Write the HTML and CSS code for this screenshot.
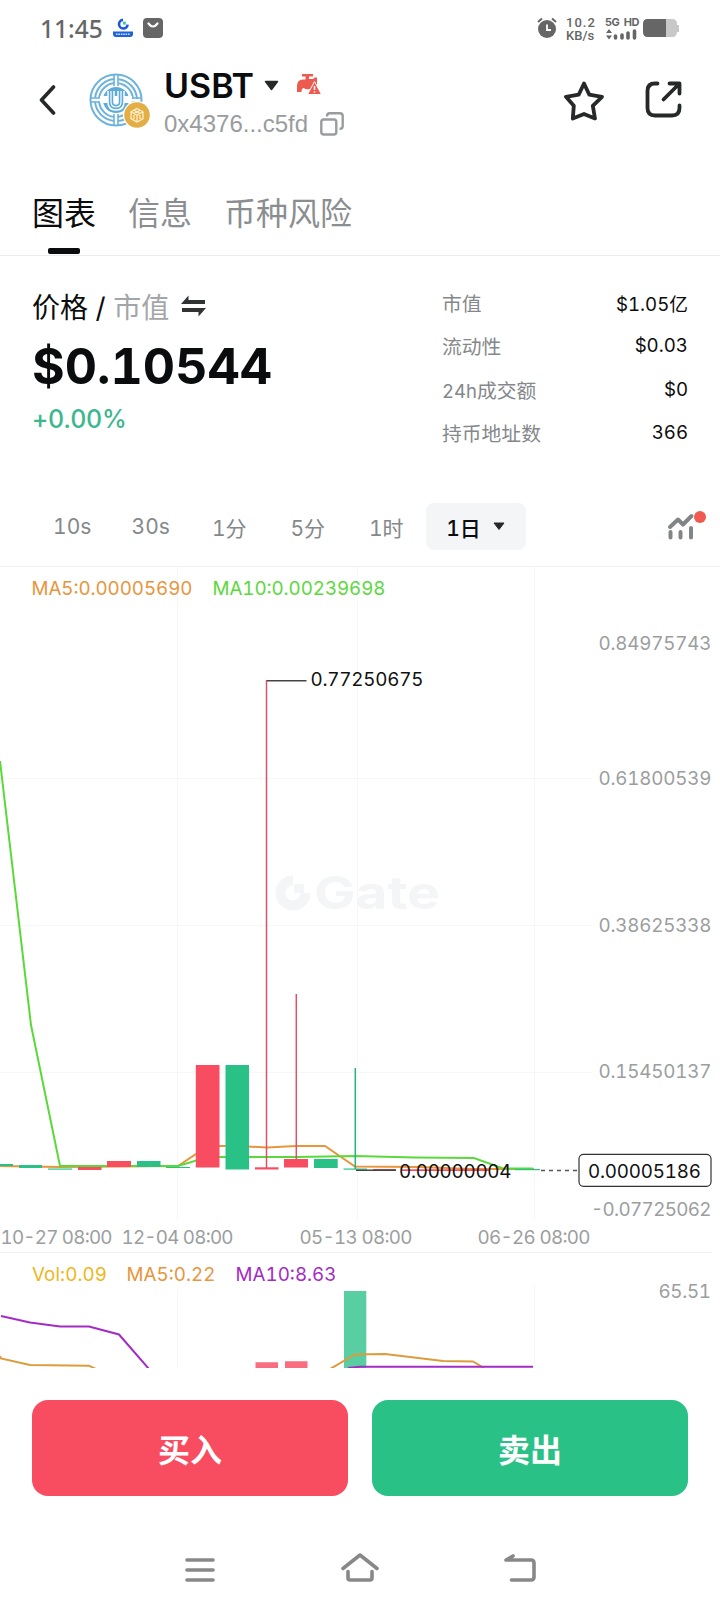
FILE: index.html
```html
<!DOCTYPE html>
<html lang="zh-CN">
<head>
  <meta charset="UTF-8">
  <meta name="viewport" content="width=device-width, initial-scale=1.0">
  <title>USBT</title>
  <link rel="stylesheet" href="styles.css">
</head>
<body>

<div class="app">
  <!-- Status bar -->
  <div class="status-bar">
    <div class="status-left">
      <span class="clock">11:45</span>
      <svg class="status-app" width="20" height="20" viewBox="0 0 20 20">
        <path d="M10 1.900A4.300 4.300 0 1 0 14.600 6.600" fill="none" stroke="#1d55e0" stroke-width="2.600"/>
        <path d="M10 3.600h2.800v3H10z" fill="#2fd0a0"/>
        <path d="M0 13.500h20v2.500q0 3-3 3H3q-3 0-3-3z" fill="#1d62d8"/>
        <path d="M3 16.300h14" stroke="#cfe0ff" stroke-width="1.600" stroke-dasharray="1.600 .8"/>
      </svg>
      <svg width="20" height="20" viewBox="0 0 20 20">
        <rect width="20" height="20" rx="4" fill="#666"/>
        <path d="M5.500 5.500q4.500 6 9 0" fill="none" stroke="#fff" stroke-width="2.200" stroke-linecap="round"/>
      </svg>
    </div>
    <div class="status-right">
      <svg width="20" height="22" viewBox="0 0 20 22">
        <circle cx="10" cy="12" r="9" fill="#666"/>
        <path d="M1 5l4-3.500M19 5l-4-3.500" stroke="#666" stroke-width="2"/>
        <path d="M10 7.500v5.500h4" fill="none" stroke="#fff" stroke-width="1.800"/>
      </svg>
      <div class="net-speed"><span>10.2</span><span>KB/s</span></div>
      <div class="signal">
        <span>5G HD</span>
        <svg width="32" height="12" viewBox="0 0 32 12">
          <path d="M1 5l3-4 3 4zM1 7.500l3 4 3-4z" fill="#666"/>
          <path d="M10.500 8v2M17 7v3M23 5v5M29.500 3v7" stroke="#666" stroke-width="3.600" stroke-linecap="round"/>
        </svg>
      </div>
      <svg width="36" height="18" viewBox="0 0 36 18">
        <path d="M5 0h24q5 0 5 5v1h2v7h-2q0 5-5 5H5q-5 0-5-5V5q0-5 5-5z" fill="#c8c8c8"/>
        <path d="M5 0h18v18H5q-5 0-5-5V5q0-5 5-5z" fill="#666"/>
      </svg>
    </div>
  </div>

  <!-- Token header -->
  <div class="header">
    <svg class="back" width="17" height="30" viewBox="0 0 17 30">
      <path d="M14.500 2L2.500 15l12 13" fill="none" stroke="#26282a" stroke-width="3.600" stroke-linecap="round" stroke-linejoin="round"/>
    </svg>
    <svg class="token-logo" width="62" height="56" viewBox="0 0 62 56">
      <g fill="none" stroke="#6db3dc" stroke-width="2">
        <circle cx="27" cy="27" r="25.500"/>
        <circle cx="27" cy="27" r="21" stroke-dasharray="29 4" stroke-dashoffset="-2"/>
        <circle cx="27" cy="27" r="17" stroke-dasharray="22.700 4" stroke-dashoffset="-2"/>
        <path d="M25 2v11M29 2v11M25 41v11M29 41v11M2 25h11M2 29h11M41 25h11M41 29h11" stroke-width="1.600"/>
      </g>
      <circle cx="27" cy="27" r="13" fill="#5eabd9"/>
      <path d="M11 23h32v7H11z" fill="#fff"/>
      <path d="M22 18v11q0 5 5 5t5-5V18" fill="none" stroke="#fff" stroke-width="7.500"/>
      <path d="M22 18v11q0 5 5 5t5-5V18" fill="none" stroke="#5eabd9" stroke-width="4.500"/>
      <path d="M22 18v11q0 5 5 5t5-5V18" fill="none" stroke="#fff" stroke-width="1.200"/>
      <circle cx="48" cy="42" r="14" fill="#fff"/>
      <circle cx="48" cy="42" r="12.800" fill="#e4ae46"/>
      <path d="M48 35.500l6 3.300v6.800l-6 3.400-6-3.400v-6.800zM42 38.800l6 3.400 6-3.400M48 42.200v6.500M45 37.200l6 3.300M51 37.200l-6 3.300M45 42v4M51 42v4" fill="none" stroke="#fff3d2" stroke-width="1.200"/>
    </svg>
    <div class="token">
      <div class="token-name">
        <span>USBT</span>
        <svg width="15" height="11" viewBox="0 0 15 11"><path d="M1.500 1.500h12l-6 8z" fill="#26282a" stroke="#26282a" stroke-width="1.500" stroke-linejoin="round"/></svg>
        <svg class="faucet" width="24" height="21" viewBox="0 0 24 21">
          <path d="M5 0h11v2.500h-4V5h4l1.500-1.500H20V15l-5 3-2-3q-5 1-6-1-2.500 0-2.500 4H0v-6Q0 5.500 6 5.500h2.500v-3H5z" fill="#ec5a50"/>
          <path d="M17.500 7.500l7 13H10.500z" fill="#ec5a50" stroke="#fff" stroke-width="1"/>
          <path d="M17.500 12v4M17.500 17.200v1.500" stroke="#fff" stroke-width="1.500"/>
        </svg>
      </div>
      <div class="token-address">
        <span>0x4376...c5fd</span>
        <svg width="24" height="24" viewBox="0 0 24 24" fill="none" stroke="#999c9e" stroke-width="2.400">
          <rect x="1.300" y="7.500" width="15" height="15" rx="2.500"/>
          <path d="M7 4.500V4q0-2.700 2.700-2.700H20q2.700 0 2.700 2.700v10q0 2.700-2.700 2.700h-.5"/>
        </svg>
      </div>
    </div>
    <div class="header-actions">
      <svg width="40" height="40" viewBox="0 0 40 40">
        <path d="M20 2.500l5.300 11.200L38 15.800l-9.200 9 2.200 12.700L20 33l-11.200 4.500 1-12.700L2 15.800l12.700-2.100z" fill="none" stroke="#26282a" stroke-width="3.800" stroke-linejoin="round"/>
      </svg>
      <svg width="37" height="37" viewBox="0 0 37 37" fill="none" stroke="#26282a" stroke-width="3.800" stroke-linecap="round" stroke-linejoin="round">
        <path d="M12.500 2.500H10Q2.500 2.500 2.500 10v17q0 7.500 7.500 7.500h17q7.500 0 7.500-7.500v-2.500"/>
        <path d="M24.500 2.500h10v10M34 3L18.500 18.500"/>
      </svg>
    </div>
  </div>

  <!-- Tabs -->
  <div class="tabs">
    <div class="tab active">图表</div>
    <div class="tab">信息</div>
    <div class="tab">币种风险</div>
  </div>

  <!-- Price and stats -->
  <div class="summary">
    <div class="price-box">
      <div class="price-switch">
        <span>价格 / <em>市值</em></span>
        <svg width="25" height="22" viewBox="0 0 25 22" fill="#303234">
          <path d="M0 9L7.500.5V5H24v4zM25 13l-7.500 8.500V17H1v-4z"/>
        </svg>
      </div>
      <div class="price">$0.10544</div>
      <div class="change">+0.00%</div>
    </div>
    <div class="stats">
      <div class="stat"><span>市值</span><b>$1.05亿</b></div>
      <div class="stat"><span>流动性</span><b>$0.03</b></div>
      <div class="stat"><span><i>24h</i>成交额</span><b>$0</b></div>
      <div class="stat"><span>持币地址数</span><b>366</b></div>
    </div>
  </div>

  <!-- Time range -->
  <div class="periods">
    <span class="period">10s</span>
    <span class="period">30s</span>
    <span class="period">1分</span>
    <span class="period">5分</span>
    <span class="period">1时</span>
    <span class="period selected">1日
      <svg width="12" height="9" viewBox="0 0 12 9"><path d="M1 1h10L6 7.500z" fill="#26282a" stroke="#26282a" stroke-linejoin="round"/></svg>
    </span>
    <svg class="indicator" width="40" height="32" viewBox="0 0 40 32">
      <g fill="none" stroke="#828587" stroke-width="4" stroke-linecap="round">
        <path d="M4 17l8-7.500 5 5 8.500-8.500" stroke-linejoin="round"/>
        <path d="M4.500 22v5.500M14.500 22v5.500M25 18v9.500"/>
      </g>
      <circle cx="34" cy="7" r="6" fill="#f05a50"/>
    </svg>
  </div>

  <!-- Candles and volume -->
  <svg class="chart" width="720" height="801" viewBox="0 567 720 801">
    <g class="grid">
      <path d="M177.500 567v653M357.500 567v653M534.500 567v653M0 778.500h592M0 925.500h592M0 1072.500h592M177.500 1285v83M534.500 1285v83"/>
      <path class="divider" d="M0 1252.500h712"/>
    </g>

    <g class="watermark">
      <path d="M293 880.500a12.500 12.500 0 1 0 12.500 12.500"/>
      <path class="dot" d="M294 884h10v9h-10z"/>
      <text x="314" y="909" textLength="126" lengthAdjust="spacingAndGlyphs">Gate</text>
    </g>

    <path class="ma5" d="M0 1166L60 1167L178 1166L208 1146H237L267 1147.500L296 1146H325L355 1166.500L420 1167L470 1169H534"/>
    <path class="ma10" d="M0 761L31 1025L60 1166H178L208 1157H296L355 1156L415 1157.500L474 1158L503 1168.500H533"/>

    <g class="down">
      <rect x="78" y="1167" width="23.500" height="3"/>
      <rect x="107" y="1161" width="24" height="6"/>
      <rect x="195.800" y="1065" width="23.700" height="102.500"/>
      <rect x="255" y="1167.300" width="23.500" height="2.200"/>
      <rect x="284" y="1159" width="24" height="8.500"/>
      <rect x="373" y="1169" width="23" height="1.600"/>
      <rect x="402" y="1169.300" width="88" height="1.700"/>
      <path d="M266.500 680v488M296.300 994v166"/>
    </g>
    <g class="up">
      <rect x="0" y="1164" width="13" height="2"/>
      <rect x="19" y="1165" width="23" height="3"/>
      <rect x="48" y="1168.500" width="24" height="1.200"/>
      <rect x="137" y="1161" width="23.500" height="6"/>
      <rect x="166" y="1167" width="24" height="1"/>
      <rect x="225.500" y="1065" width="23.500" height="104.500"/>
      <rect x="314" y="1159" width="23.700" height="9"/>
      <rect x="343.500" y="1168.500" width="23.500" height="1.200"/>
      <rect x="515" y="1169" width="25" height="1.200"/>
      <path d="M355.300 1068v101"/>
    </g>

    <!-- High / low marks -->
    <path class="mark" d="M267 680.800h39.500M356 1170.200h40"/>
    <text class="mark-text" x="310.500" y="686" textLength="113">0.77250675</text>
    <text class="mark-text" x="399" y="1178" textLength="112.500">0.00000004</text>

    <!-- Current price -->
    <path class="current-line" d="M541 1170.500h38"/>
    <rect class="current-box" x="579" y="1154.300" width="132" height="32" rx="4.500"/>
    <text class="mark-text" x="588" y="1178" textLength="113">0.00005186</text>

    <g class="axis">
      <text x="598.500" y="650" textLength="113">0.84975743</text>
      <text x="598.500" y="785" textLength="113">0.61800539</text>
      <text x="598.500" y="932" textLength="113">0.38625338</text>
      <text x="598.500" y="1078" textLength="113">0.15450137</text>
      <text x="591" y="1216" textLength="120.500">-0.07725062</text>
      <text x="658.500" y="1298" textLength="52.500">65.51</text>
      <text x="0.500" y="1244" textLength="112">10-27 08:00</text>
      <text x="121.500" y="1244" textLength="112">12-04 08:00</text>
      <text x="299.500" y="1244" textLength="113">05-13 08:00</text>
      <text x="477.500" y="1244" textLength="113">06-26 08:00</text>
    </g>

    <g class="legend">
      <text x="31.500" y="595" textLength="161" fill="#e8953c">MA5:0.00005690</text>
      <text x="212.500" y="595" textLength="173" fill="#5bd93c">MA10:0.00239698</text>
      <text x="32" y="1281" textLength="75" fill="#efb61c">Vol:0.09</text>
      <text x="126.500" y="1281" textLength="89" fill="#e8953c">MA5:0.22</text>
      <text x="235.500" y="1281" textLength="101" fill="#a32cc4">MA10:8.63</text>
    </g>

    <!-- Volume -->
    <path d="M255.500 1362.300H278v6h-22.500zM285 1361.300h22.500v7H285z" fill="#f86e80"/>
    <path d="M344 1291h22.300v77H344z" fill="#58cea2"/>
    <path class="vol-ma5" d="M0 1356L1 1358.500L30 1365L89 1365.700L96 1369M330 1369L355 1354.500L385 1354L443 1361L473 1361.500L484 1368"/>
    <path class="vol-ma10" d="M1 1316L30 1322.500L60 1326.500H89L119 1334.500L149 1369M348 1368L360 1366.700H533"/>
  </svg>

  <!-- Buy / sell -->
  <div class="trade">
    <button class="buy">买入</button>
    <button class="sell">卖出</button>
  </div>

  <!-- System navigation -->
  <div class="nav-bar">
    <svg width="38" height="32" viewBox="0 0 38 32"><path d="M6 7h26M6 17h26M6 27h26"/></svg>
    <svg width="38" height="32" viewBox="0 0 38 32"><path d="M2 15.500L19 2l17 13.500M7 18.500V25q0 2 2 2h20q2 0 2-2v-6.500"/></svg>
    <svg width="38" height="32" viewBox="0 0 38 32"><path d="M12 3L5 7h25q3 0 3 3v14q0 3-3 3H10.500"/></svg>
  </div>
</div>

</body>
</html>
```

FILE: styles.css
```css
body {
  margin: 0;
  background: #fff;
  font-family: Inter, "Noto Sans CJK SC", sans-serif;
  font-variant-numeric: tabular-nums;
  color: #0b0c0d;
}
svg {
  display: block;
  flex: none;
}
.app {
  width: 720px;
  height: 1612px;
  overflow: hidden;
}

/* Status bar */
.status-bar {
  display: flex;
  justify-content: space-between;
  height: 56px;
  padding: 0 41px 0 40px;
  color: #666;
}
.status-left,
.status-right {
  display: flex;
  align-items: center;
}
.clock {
  width: 63px;
  margin-right: 10px;
  font-family: "Noto Sans", sans-serif;
  font-size: 24.5px;
  font-weight: 500;
}
.status-app {
  margin-right: 10px;
}
.net-speed {
  display: flex;
  flex-direction: column;
  width: 30px;
  margin: 2px 9px 0;
  font-family: Roboto, sans-serif;
  font-weight: 500;
  font-size: 13px;
  line-height: 13px;
}
.net-speed span:first-child {
  letter-spacing: 1px;
}
.signal {
  width: 32px;
  margin-right: 6px;
  font-size: 11px;
  font-weight: 700;
  line-height: 11px;
  white-space: nowrap;
  letter-spacing: -0.5px;
  word-spacing: 2px;
}

/* Header */
.header {
  display: flex;
  align-items: flex-start;
  height: 124px;
  padding: 0 38px 0 39px;
}
.back {
  margin: 29px 33px 0 0;
}
.token-logo {
  margin: 17px 13px 0 0;
}
.token-name {
  display: flex;
  align-items: center;
  height: 41px;
  margin-top: 9px;
  font-size: 34px;
  font-weight: 600;
}
.token-name span {
  width: 100px;
}
.faucet {
  margin: -2px 0 0 18px;
}
.token-address {
  display: flex;
  align-items: center;
  gap: 12px;
  height: 36px;
  font-family: "Liberation Sans", sans-serif;
  font-size: 24px;
  color: #999c9e;
}
.header-actions {
  display: flex;
  gap: 41px;
  margin: 25px 0 0 auto;
}

/* Tabs */
.tabs {
  display: flex;
  gap: 32px;
  height: 75px;
  padding-left: 32px;
  border-bottom: 1px solid #eceded;
}
.tab {
  position: relative;
  font-size: 32px;
  line-height: 67px;
  color: #8b8e90;
}
.tab.active {
  color: #0b0c0d;
}
.tab.active::after {
  content: "";
  position: absolute;
  left: 16px;
  bottom: 1px;
  width: 32px;
  height: 6px;
  border-radius: 2px;
  background: #0b0c0d;
}

/* Price */
.summary {
  display: flex;
  justify-content: space-between;
  height: 222px;
  padding: 25px 32px 0;
  box-sizing: border-box;
}
.price-switch {
  display: flex;
  align-items: center;
  gap: 12px;
  height: 50px;
  margin-bottom: 4px;
  font-size: 28px;
}
.price-switch em {
  font-style: normal;
  color: #a3a6a8;
}
.price {
  font-size: 50px;
  font-weight: 700;
  line-height: 62px;
}
.change {
  font-size: 25px;
  line-height: 44px;
  font-weight: 500;
  letter-spacing: -0.3px;
  color: #3cb790;
}
.stats {
  width: 246px;
}
.stat {
  display: flex;
  justify-content: space-between;
  align-items: center;
  height: 43.3px;
  font-size: 19.8px;
  color: #85888a;
}
.stat i {
  font-style: normal;
  font-size: 18.5px;
}
.stat b {
  font-size: 18.7px;
  font-weight: 400;
  color: #0b0c0d;
}

/* Periods */
.periods {
  display: flex;
  align-items: center;
  height: 88px;
  padding: 9px 0 0 33px;
  box-sizing: border-box;
  height: 89px;
  border-bottom: 1px solid #f0f1f1;
}
.period {
  width: 78.5px;
  text-align: center;
  font-size: 21px;
  color: #85888a;
}
.period.selected {
  display: flex;
  align-items: center;
  justify-content: center;
  gap: 12px;
  width: 100px;
  height: 47px;
  border-radius: 8px;
  background: #f3f5f7;
  color: #0b0c0d;
  font-weight: 500;
}
.indicator {
  margin: -2px 14px 0 auto;
}

/* Chart */
.grid path {
  fill: none;
  stroke: #f6f7f7;
}
.grid .divider {
  stroke: #f0f1f1;
}
.chart text {
  font-size: 18.8px;
}
.axis {
  fill: #9b9ea0;
}
.mark-text {
  fill: #111;
}
.watermark path {
  fill: none;
  stroke: #f3f5f6;
  stroke-width: 10;
}
.watermark .dot {
  fill: #f3f5f6;
  stroke: none;
}
.chart .watermark text {
  font-size: 45px;
  font-weight: 700;
  fill: #f3f5f6;
}
.ma5,
.ma10,
.vol-ma5,
.vol-ma10 {
  fill: none;
  stroke-width: 2;
}
.ma5 { stroke: #e8953c; }
.ma10 { stroke: #5bd93c; }
.vol-ma5 { stroke: #dd9c3c; }
.vol-ma10 { stroke: #a32cc4; }
.down { fill: #f84c60; }
.down path { stroke: #d9536a; stroke-width: 1.5; }
.up { fill: #2ac187; }
.up path { stroke: #2ab07e; stroke-width: 1.5; }
.mark {
  stroke: #444;
  stroke-width: 1.4;
}
.current-line {
  stroke: #555;
  stroke-width: 1.5;
  stroke-dasharray: 4 4;
}
.current-box {
  fill: #fff;
  stroke: #333;
  stroke-width: 1.2;
}

/* Trade buttons */
.trade {
  display: flex;
  gap: 24px;
  padding: 32px 32px 0;
}
.trade button {
  flex: 1;
  height: 96px;
  border: none;
  border-radius: 16px;
  padding: 0 0 1px;
  font-family: "Noto Sans CJK SC", sans-serif;
  font-size: 32px;
  font-weight: 700;
  color: #fff;
}
.trade .buy { background: #f84c60; }
.trade .sell { background: #2ac187; }

/* System navigation */
.nav-bar {
  display: flex;
  justify-content: center;
  gap: 122px;
  padding-top: 57px;
}
.nav-bar path {
  fill: none;
  stroke: #888;
  stroke-width: 3.6;
  stroke-linecap: round;
  stroke-linejoin: round;
}
```
